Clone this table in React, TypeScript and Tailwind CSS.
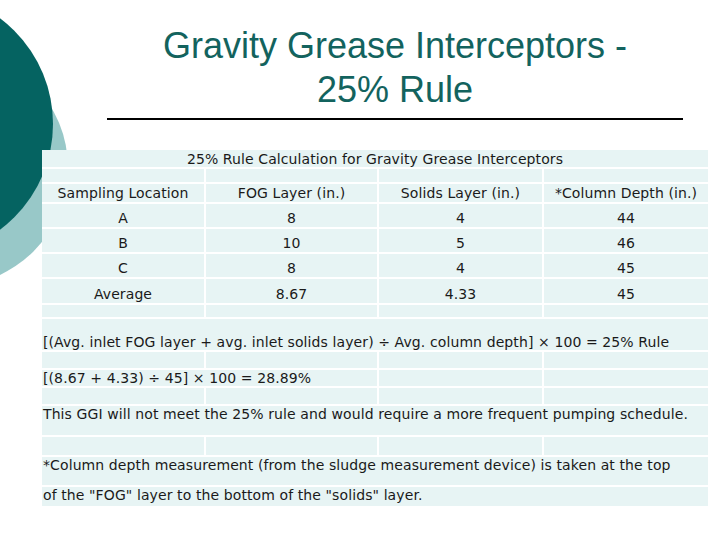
import React from 'react';

const cell = 'bg-[#e7f4f4] flex';
const center = `${cell} items-end justify-center pb-[1px]`;

function Row({ values }: { values: string[] }) {
  return (
    <>
      {values.map((v, i) => (
        <div key={i} className={center}>
          {v}
        </div>
      ))}
    </>
  );
}

function Empty() {
  return (
    <>
      <div className={cell} />
      <div className={cell} />
      <div className={cell} />
      <div className={cell} />
    </>
  );
}

export default function App() {
  const data = [
    ['A', '8', '4', '44'],
    ['B', '10', '5', '46'],
    ['C', '8', '4', '45'],
    ['Average', '8.67', '4.33', '45'],
  ];

  return (
    <div className="relative w-[720px] h-[540px] overflow-hidden bg-white">
      {/* background circles */}
      <div className="absolute left-[-168px] top-[50px] w-[236px] h-[236px] rounded-full bg-[#98c8c8]" />
      <div className="absolute left-[-211px] top-[-8px] w-[264px] h-[264px] rounded-full bg-[#056361]" />

      <div className="relative">
        <h1
          className="pt-[24px] pl-[70px] text-center text-[36px] leading-[44px] text-[#13635e] font-normal"
          style={{ fontFamily: '"Liberation Sans", Arial, sans-serif' }}
        >
          Gravity Grease Interceptors -<br />
          25% Rule
        </h1>
        <div className="ml-[107px] mt-[6px] w-[576px] h-[2px] bg-black" />

        <div
          className="ml-[42px] mt-[30px] w-[666px] grid grid-cols-[162px_171px_163px_164px] grid-rows-[17px_13px_18px_23px_23px_23px_24px_12px_31px_16px_16px_16px_29px_18px_28px_19px] gap-[2px] bg-white text-[14px] leading-[16px] tracking-[0.1px] text-[#1a1a1a]"
          style={{ fontFamily: '"DejaVu Sans", Verdana, sans-serif' }}
        >
          <div className={`${cell} col-span-4 items-end justify-center`}>
            25% Rule Calculation for Gravity Grease Interceptors
          </div>
          <Empty />
          <Row values={['Sampling Location', 'FOG Layer (in.)', 'Solids Layer (in.)', '*Column Depth (in.)']} />
          {data.map((r, i) => (
            <Row key={i} values={r} />
          ))}
          <Empty />
          <div className={`${cell} col-span-4 items-end pl-[1px] whitespace-nowrap`}>
            [(Avg. inlet FOG layer + avg. inlet solids layer) ÷ Avg. column depth] × 100 = 25% Rule
          </div>
          <Empty />
          <div className={`${cell} col-span-2 items-end pl-[1px] whitespace-nowrap`}>
            [(8.67 + 4.33) ÷ 45] × 100 = 28.89%
          </div>
          <div className={cell} />
          <div className={cell} />
          <Empty />
          <div className={`${cell} col-span-4 items-start pl-[1px] whitespace-nowrap`}>
            This GGI will not meet the 25% rule and would require a more frequent pumping schedule.
          </div>
          <Empty />
          <div className={`${cell} col-span-4 items-start pl-[1px] whitespace-nowrap`}>
            *Column depth measurement (from the sludge measurement device) is taken at the top
          </div>
          <div className={`${cell} col-span-4 items-start pl-[1px] whitespace-nowrap`}>
            of the "FOG" layer to the bottom of the "solids" layer.
          </div>
        </div>
      </div>
    </div>
  );
}
